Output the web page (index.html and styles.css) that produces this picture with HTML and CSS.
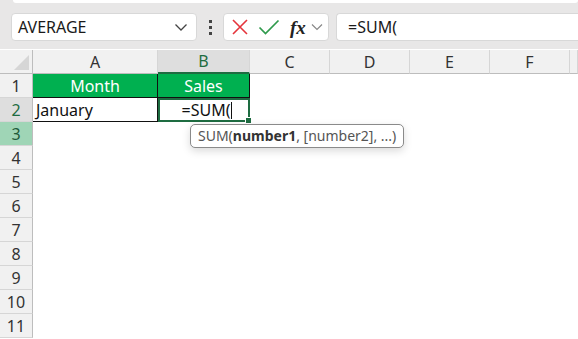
FILE: index.html
```html
<!DOCTYPE html>
<html lang="en">
<head>
    <meta charset="UTF-8">
    <title>Book1 - Excel</title>
    <link rel="stylesheet" href="styles.css">
</head>
<body>
    <div class="toolbar">
        <div class="ribbon-edge"></div>
        <div class="formula-row">
            <div class="name-box">
                <span>AVERAGE</span>
                <svg class="chev" width="14" height="9" viewBox="0 0 14 9"><path d="M1.5 1.5 L7 7 L12.5 1.5" fill="none" stroke="#444" stroke-width="1.3"/></svg>
            </div>
            <div class="dots"><i></i><i></i><i></i></div>
            <div class="fx-buttons">
                <svg width="18" height="18" viewBox="0 0 18 18"><path d="M2 2 L16 16 M16 2 L2 16" stroke="#e5343c" stroke-width="1.6" fill="none"/></svg>
                <svg width="22" height="18" viewBox="0 0 22 18"><path d="M1.5 9.5 L7.5 15.5 L20.5 2.5" stroke="#2f9a4c" stroke-width="1.7" fill="none"/></svg>
                <span class="fx">fx</span>
                <svg width="12" height="8" viewBox="0 0 12 8"><path d="M1 1.5 L6 6.5 L11 1.5" fill="none" stroke="#888" stroke-width="1.2"/></svg>
            </div>
            <div class="formula-input">=SUM(</div>
        </div>
    </div>

    <div class="sheet">
        <div class="corner"><div class="tri"></div></div>
        <div class="col-head">A</div>
        <div class="col-head active">B</div>
        <div class="col-head">C</div>
        <div class="col-head">D</div>
        <div class="col-head">E</div>
        <div class="col-head">F</div>
        <div class="col-head"></div>

        <div class="row-head">1</div>
        <div class="cell head-cell a1">Month</div>
        <div class="cell head-cell b1">Sales</div>
        <div class="cell"></div><div class="cell"></div><div class="cell"></div><div class="cell"></div><div class="cell"></div>

        <div class="row-head active">2</div>
        <div class="cell a2">January</div>
        <div class="cell b2"><span>=SUM(</span><i class="caret"></i><i class="handle"></i>
            <div class="tip">SUM(<b>number1</b>, [number2], ...)</div>
        </div>
        <div class="cell"></div><div class="cell"></div><div class="cell"></div><div class="cell"></div><div class="cell"></div>

        <div class="row-head hl">3</div>
        <div class="cell"></div><div class="cell"></div><div class="cell"></div><div class="cell"></div><div class="cell"></div><div class="cell"></div><div class="cell"></div>

        <div class="row-head">4</div>
        <div class="cell"></div><div class="cell"></div><div class="cell"></div><div class="cell"></div><div class="cell"></div><div class="cell"></div><div class="cell"></div>
        <div class="row-head">5</div>
        <div class="cell"></div><div class="cell"></div><div class="cell"></div><div class="cell"></div><div class="cell"></div><div class="cell"></div><div class="cell"></div>
        <div class="row-head">6</div>
        <div class="cell"></div><div class="cell"></div><div class="cell"></div><div class="cell"></div><div class="cell"></div><div class="cell"></div><div class="cell"></div>
        <div class="row-head">7</div>
        <div class="cell"></div><div class="cell"></div><div class="cell"></div><div class="cell"></div><div class="cell"></div><div class="cell"></div><div class="cell"></div>
        <div class="row-head">8</div>
        <div class="cell"></div><div class="cell"></div><div class="cell"></div><div class="cell"></div><div class="cell"></div><div class="cell"></div><div class="cell"></div>
        <div class="row-head">9</div>
        <div class="cell"></div><div class="cell"></div><div class="cell"></div><div class="cell"></div><div class="cell"></div><div class="cell"></div><div class="cell"></div>
        <div class="row-head">10</div>
        <div class="cell"></div><div class="cell"></div><div class="cell"></div><div class="cell"></div><div class="cell"></div><div class="cell"></div><div class="cell"></div>
        <div class="row-head">11</div>
        <div class="cell"></div><div class="cell"></div><div class="cell"></div><div class="cell"></div><div class="cell"></div><div class="cell"></div><div class="cell"></div>
    </div>
</body>
</html>
```

FILE: styles.css
```css
body {
    margin: 0;
    background-color: white;
    font-family: "Noto Sans", "Open Sans", sans-serif;
    color: #222;
    overflow: hidden;
}
.toolbar {
    height: 49px;
    background-color: #e8e7e7;
    box-sizing: border-box;
}
.ribbon-edge {
    height: 3px;
    margin-left: 13px;
    background-color: white;
    border-radius: 0 0 4px 4px;
}
.formula-row {
    display: flex;
    align-items: center;
    height: 28px;
    margin-top: 10px;
    padding-left: 11px;
}
.name-box {
    width: 186px;
    height: 28px;
    box-sizing: border-box;
    background-color: white;
    border: 1px solid #d8d8d8;
    border-radius: 4px;
    display: flex;
    align-items: center;
    justify-content: space-between;
    padding: 0 8px 0 6px;
    font-size: 16px;
    color: #1a1a1a;
}
.dots {
    width: 26px;
    display: flex;
    flex-direction: column;
    align-items: center;
    gap: 3px;
}
.dots i {
    display: block;
    width: 3px;
    height: 3px;
    background-color: #444;
}
.fx-buttons {
    width: 106px;
    height: 28px;
    box-sizing: border-box;
    background-color: white;
    border: 1px solid #d8d8d8;
    border-radius: 4px;
    display: flex;
    align-items: center;
    padding-left: 7px;
}
.fx-buttons svg:first-child {
    margin-right: 9px;
}
.fx {
    font-family: "Liberation Serif", serif;
    font-style: italic;
    font-weight: bold;
    font-size: 19px;
    color: #222;
    margin-left: 10px;
    margin-right: 5px;
    line-height: 1;
}
.formula-input {
    flex: 1;
    margin-left: 7px;
    height: 28px;
    box-sizing: border-box;
    background-color: white;
    border: 1px solid #d8d8d8;
    border-right: none;
    border-radius: 4px 0 0 4px;
    padding-left: 11px;
    font-size: 16px;
    line-height: 26px;
    color: #1a1a1a;
}
.sheet {
    display: grid;
    grid-template-columns: 33px 125px 92px 80px 80px 80px 80px 1fr;
    grid-auto-rows: 24px;
    margin-top: 1px;
}
.corner, .col-head, .row-head {
    background-color: #f1f1f1;
    color: #333;
    font-size: 16px;
    box-sizing: border-box;
    display: flex;
    align-items: center;
    justify-content: center;
}
.corner {
    border-right: 1px solid #bdbdbd;
    border-bottom: 1px solid #bdbdbd;
    position: relative;
}
.tri {
    position: absolute;
    right: 3px;
    bottom: 3px;
    width: 0;
    height: 0;
    border-left: 15px solid transparent;
    border-bottom: 15px solid #d6d6d6;
}
.col-head {
    border-right: 1px solid #d6d6d6;
    border-bottom: 1px solid #bdbdbd;
}
.col-head.active {
    background-color: #dedede;
    border-bottom: 2px solid #1e6c41;
    color: #1e6c41;
}
.row-head {
    border-right: 1px solid #bdbdbd;
    border-bottom: 1px solid #d6d6d6;
}
.row-head.active {
    background-color: #dedede;
    color: #1e6c41;
}
.row-head.hl {
    background-color: #9fd5b6;
    color: #1e5b3a;
}
.cell {
    box-sizing: border-box;
    font-size: 16px;
    display: flex;
    align-items: center;
    color: #111;
}
.head-cell {
    background-color: #00b050;
    color: white;
    justify-content: center;
    border-right: 1px solid #111;
    border-bottom: 1px solid #111;
}
.a2 {
    padding-left: 3px;
    border-bottom: 1px solid #111;
    border-right: 1px solid #111;
}
.b2 {
    position: relative;
    justify-content: center;
    border: 2px solid #1e6c41;
    padding-left: 6px;
}
.caret {
    display: block;
    width: 1px;
    height: 17px;
    background-color: #111;
    margin-left: 1px;
}
.handle {
    position: absolute;
    right: -4px;
    bottom: -4px;
    width: 5px;
    height: 5px;
    background-color: #1e6c41;
    border: 1px solid white;
}
.tip {
    position: absolute;
    left: 30px;
    top: 24px;
    z-index: 2;
    white-space: nowrap;
    background-color: white;
    border: 1px solid #8a8a8a;
    border-radius: 5px;
    padding: 0 7px;
    height: 24px;
    box-sizing: border-box;
    line-height: 22px;
    font-size: 14px;
    color: #555;
    box-shadow: 0 3px 8px rgba(0, 0, 0, 0.15);
}
.tip b {
    color: #333;
}
```
